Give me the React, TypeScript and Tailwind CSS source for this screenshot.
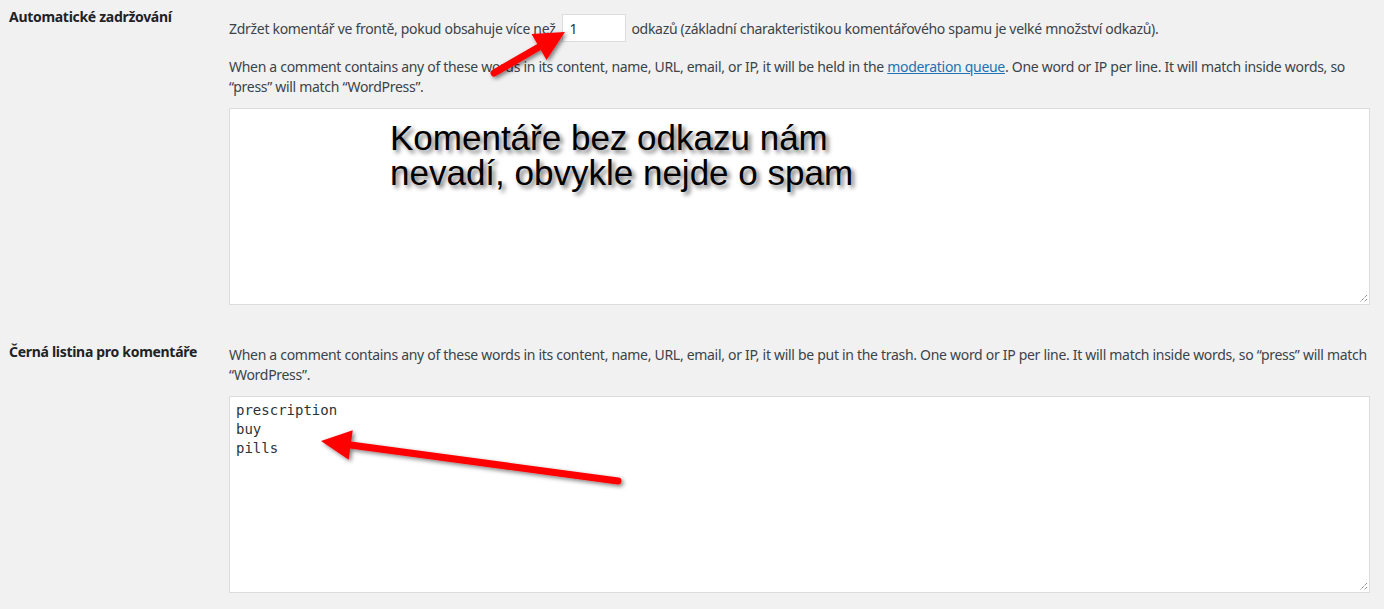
const sans = "font-['Noto_Sans',sans-serif] tracking-[-0.3px]"

function Arrow({ x1, y1, x2, y2 }: { x1: number; y1: number; x2: number; y2: number }) {
  const dx = x2 - x1
  const dy = y2 - y1
  const len = Math.sqrt(dx * dx + dy * dy)
  const ux = dx / len
  const uy = dy / len
  const head = 30
  const half = 15
  const bx = x2 - ux * head
  const by = y2 - uy * head
  const p1 = `${bx - uy * half},${by + ux * half}`
  const p2 = `${bx + uy * half},${by - ux * half}`
  return (
    <g filter="url(#ash)">
      <line x1={x1} y1={y1} x2={bx + ux * 4} y2={by + uy * 4} stroke="#ff0000" strokeWidth="7" strokeLinecap="round" />
      <polygon points={`${x2},${y2} ${p1} ${p2}`} fill="#ff0000" />
    </g>
  )
}

export default function App() {
  return (
    <div className={`relative w-[1384px] h-[609px] overflow-hidden bg-[#f1f1f1] text-[14px] text-[#3c434a] ${sans}`}>
      <div className="grid grid-cols-[229px_1155px]">
        <div className="pl-[9px] pt-[7px] font-bold text-[#1d2327] leading-[20px]">Automatické zadržování</div>
        <div className="pt-[14px]">
          <div className="flex items-center h-[28px]">
            <span>Zdržet komentář ve frontě, pokud obsahuje více než</span>
            <div className="ml-[7px] mr-[5px] w-[64px] h-[28px] bg-white border border-[#dcdcde] pl-[6px] flex items-center text-[#2c3338]">1</div>
            <span>odkazů (základní charakteristikou komentářového spamu je velké množství odkazů).</span>
          </div>
          <p className="mt-[15px] leading-[19.5px] pr-[30px]">
            When a comment contains any of these words in its content, name, URL, email, or IP, it will be held in the{" "}
            <a className="text-[#2271b1] underline">moderation queue</a>. One word or IP per line. It will match inside words, so “press” will match “WordPress”.
          </p>
          <div className="relative mt-[12px] w-[1141px] h-[197px] bg-white border border-[#dcdcde]">
            <div className="absolute left-[160px] top-[11px] text-[35px] leading-[35px] tracking-normal text-black font-['Liberation_Sans',sans-serif] [text-shadow:3px_3px_4px_rgba(0,0,0,0.55)]">
              Komentáře bez odkazu nám
              <br />
              nevadí, obvykle nejde o spam
            </div>
            <Grip />
          </div>
        </div>

        <div className="pl-[9px] pt-[37px] font-bold text-[#1d2327] leading-[20px]">Černá listina pro komentáře</div>
        <div className="pt-[40px]">
          <p className="leading-[19.5px] pr-[6px]">
            When a comment contains any of these words in its content, name, URL, email, or IP, it will be put in the trash. One word or IP per line. It will match inside words, so “press” will match “WordPress”.
          </p>
          <div className="relative mt-[12px] w-[1141px] h-[197px] bg-white border border-[#dcdcde] px-[6px] pt-[4px] font-['DejaVu_Sans_Mono',monospace] tracking-normal text-[14px] leading-[19px] text-[#2c3338]">
            <div>prescription</div>
            <div>buy</div>
            <div>pills</div>
            <Grip />
          </div>
        </div>
      </div>

      <svg className="absolute inset-0 pointer-events-none" width="1384" height="609">
        <defs>
          <filter id="ash" x="-20%" y="-20%" width="140%" height="140%">
            <feDropShadow dx="2" dy="2" stdDeviation="2" floodColor="#000" floodOpacity="0.5" />
          </filter>
        </defs>
        <Arrow x1={494} y1={73} x2={565} y2={32} />
        <Arrow x1={618} y1={481} x2={321} y2={441} />
      </svg>
    </div>
  )
}

function Grip() {
  return (
    <svg className="absolute right-[1px] bottom-[1px]" width="9" height="9" viewBox="0 0 9 9">
      <path d="M8 1 L1 8 M8 5 L5 8" stroke="#555" strokeWidth="1" strokeDasharray="1 1" />
    </svg>
  )
}
